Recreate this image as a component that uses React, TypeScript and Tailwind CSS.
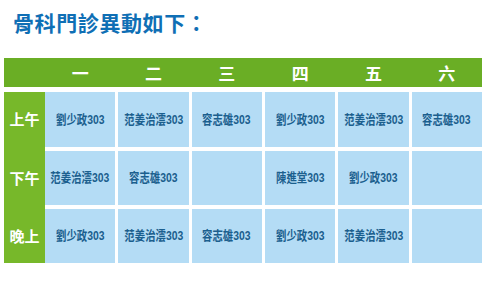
const days = ['一', '二', '三', '四', '五', '六'];

const rows = [
  { label: '上午', cells: ['劉少政303', '范姜治澐303', '容志雄303', '劉少政303', '范姜治澐303', '容志雄303'] },
  { label: '下午', cells: ['范姜治澐303', '容志雄303', '', '陳進堂303', '劉少政303', ''] },
  { label: '晚上', cells: ['劉少政303', '范姜治澐303', '容志雄303', '劉少政303', '范姜治澐303', ''] },
];

const font = { fontFamily: '"Liberation Sans", "Noto Sans CJK TC", sans-serif' };

export default function App() {
  return (
    <div className="w-[485px] h-[287px] bg-white pl-[4px] pt-[9px]" style={font}>
      <h1
        className="pl-[9px] text-[21px] leading-[26px] font-bold tracking-[0.6px] text-[#0f6fb5]"
        style={{ fontFamily: '"Noto Sans CJK TC", sans-serif' }}
      >
        骨科門診異動如下：
      </h1>

      <div className="mt-[23px] w-[478px] h-[29px] bg-[#6aae25] flex">
        <div className="w-[41px]" />
        <div className="flex-1 grid grid-cols-6 gap-x-[3px]">
          {days.map((d) => (
            <div
              key={d}
              className="flex items-center justify-center text-white text-[17px] font-bold"
              style={{ fontFamily: '"Noto Sans CJK TC", sans-serif' }}
            >
              {d}
            </div>
          ))}
        </div>
      </div>

      <div className="mt-[5px] w-[478px] flex">
        <div className="w-[41px] bg-[#77b82a] grid grid-rows-[55px_54px_54px] gap-y-[4px]">
          {rows.map((r) => (
            <div
              key={r.label}
              className="flex items-center justify-center text-white text-[15px] font-bold"
              style={{ fontFamily: '"Noto Sans CJK TC", sans-serif' }}
            >
              {r.label}
            </div>
          ))}
        </div>
        <div className="flex-1 grid grid-cols-6 grid-rows-[55px_54px_54px] gap-x-[3px] gap-y-[4px]">
          {rows.flatMap((r, ri) =>
            r.cells.map((c, ci) => (
              <div key={`${ri}-${ci}`} className="bg-[#b4dcf5] flex items-center justify-center">
                <span className="text-[13px] text-[#1b5f8e] font-semibold scale-x-[0.8] whitespace-nowrap">{c}</span>
              </div>
            ))
          )}
        </div>
      </div>
    </div>
  );
}
